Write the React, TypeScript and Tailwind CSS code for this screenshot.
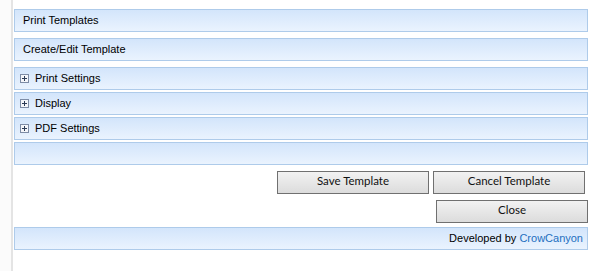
const bar =
  "h-[23px] flex items-center border border-[#aecbea] bg-gradient-to-b from-[#d3e5fb] to-[#eaf3fe] text-[11px] text-black";

function PlusBox() {
  return (
    <svg width="9" height="9" viewBox="0 0 9 9" className="mr-[6px] shrink-0">
      <rect x="0.5" y="0.5" width="8" height="8" fill="#f4f6fa" stroke="#7d8ca6" />
      <path d="M2 4.5h5M4.5 2v5" stroke="#2b3a55" strokeWidth="1" />
    </svg>
  );
}

function Button({ label }: { label: string }) {
  return (
    <button
      className="h-[23px] w-[152px] pb-[3px] leading-none border border-[#707070] bg-gradient-to-b from-[#f2f2f2] to-[#dcdcdc] text-[11.5px] text-[#111]"
      style={{ fontFamily: "Lato, 'Open Sans', sans-serif" }}
    >
      {label}
    </button>
  );
}

export default function App() {
  return (
    <div
      className="h-[271px] w-[604px] flex bg-white"
      style={{ fontFamily: "'Liberation Sans', Arial, sans-serif" }}
    >
      <div className="w-[13px] bg-[#fbfbfb] border-r-2 border-[#e4e4e4]" />
      <div className="w-[574px] ml-[1px] pt-[9px] flex flex-col">
        <div className={`${bar} pl-[8px]`}>Print Templates</div>
        <div className={`${bar} pl-[8px] mt-[6px]`}>Create/Edit Template</div>
        <div className={`${bar} pl-[5px] mt-[6px]`}>
          <PlusBox />
          Print Settings
        </div>
        <div className={`${bar} pl-[5px] mt-[2px]`}>
          <PlusBox />
          Display
        </div>
        <div className={`${bar} pl-[5px] mt-[2px]`}>
          <PlusBox />
          PDF Settings
        </div>
        <div className={`${bar} mt-[2px]`} />
        <div className="flex justify-end gap-[4px] mt-[6px] pr-[3px]">
          <Button label="Save Template" />
          <Button label="Cancel Template" />
        </div>
        <div className="flex justify-end mt-[6px]">
          <Button label="Close" />
        </div>
        <div className={`${bar} justify-end pr-[4px] mt-[4px]`}>
          Developed by&nbsp;<span className="text-[#1d6fc0]">CrowCanyon</span>
        </div>
      </div>
    </div>
  );
}
